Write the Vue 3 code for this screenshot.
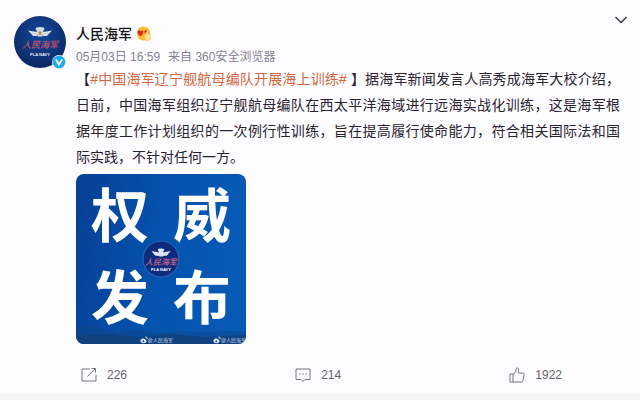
<script setup>
const post = {
  author: '人民海军',
  time: '05月03日 16:59',
  source: '360安全浏览器',
  topic: '#中国海军辽宁舰航母编队开展海上训练#',
  text: '据海军新闻发言人高秀成海军大校介绍，日前，中国海军组织辽宁舰航母编队在西太平洋海域进行远海实战化训练，这是海军根据年度工作计划组织的一次例行性训练，旨在提高履行使命能力，符合相关国际法和国际实践，不针对任何一方。',
  reposts: 226,
  comments: 214,
  likes: 1922,
}

const posterChars = ['权', '威', '发', '布']
</script>

<template>
  <main class="feed">
    <article class="card">
      <header class="head">
        <a class="avatar" href="#" aria-label="人民海军">
          <svg class="avatar-img" viewBox="0 0 52 52">
            <defs>
              <radialGradient id="navy" cx="50%" cy="35%" r="65%">
                <stop offset="0" stop-color="#12479b" />
                <stop offset="1" stop-color="#0d2862" />
              </radialGradient>
            </defs>
            <circle cx="26" cy="26" r="26" fill="url(#navy)" />
            <g fill="#d9dde2">
              <path d="M14 14.500 L23 16 L23 20 L19 20 Z" />
              <path d="M38 14.500 L29 16 L29 20 L33 20 Z" />
              <path d="M22.500 14 L29.500 14 L28.500 20.500 L23.500 20.500 Z" />
              <ellipse cx="26" cy="12.800" rx="4.500" ry="1.800" />
            </g>
            <path d="M24.500 15.500h3v2.500l-1.500 1.300-1.500-1.300z" fill="#b8923f" />
            <text class="logo-script" x="26" y="32" text-anchor="middle">人民海军</text>
            <text class="logo-latin" x="26" y="40" text-anchor="middle">PLA NAVY</text>
          </svg>
          <svg class="verified" viewBox="0 0 14 14">
            <circle cx="7" cy="7" r="7" fill="#e9f7ff" />
            <circle cx="7" cy="7" r="6.300" fill="#1eaaf1" />
            <path d="M4 4.500 L6.800 9.500 L10.200 4.500" fill="none" stroke="#fff" stroke-width="1.800" />
          </svg>
        </a>
        <div class="who">
          <div class="name-row">
            <a class="name" href="#">{{ post.author }}</a>
            <svg class="medal" viewBox="0 0 16 16">
              <rect x="1" y=".5" width="13" height="14" rx="6" fill="#fbc02f" />
              <path d="M1.500 5.500c1-2 3-1.500 3.300-.3c.8-1.200 2.700-.8 2.500 1.200c-.2 1.800-1.400 3-2.500 3.800C2.800 9.400 1.200 7.500 1.500 5.500z" fill="#d4301c" />
              <path d="M8.300 5c1-1.300 3-.8 2.900.9c0 1.500-1.200 2.700-2.200 3.500z" fill="#d4301c" />
              <path d="M8.300 10.500V8.500q.6-.8 1.300 0V6.500q.7-.9 1.400 0V5q.7-.9 1.400 0V8l.8-.8q1-.3 1 .8V12.500q-.5 2-3 2.200Q8.300 14.500 8.300 10.500z" fill="#ffe28f" stroke="#efa32f" stroke-width=".5" />
            </svg>
          </div>
          <p class="meta"><time>{{ post.time }}</time><span>来自 <a href="#">{{ post.source }}</a></span></p>
        </div>
        <button class="more" type="button" aria-label="更多">
          <svg viewBox="0 0 14 8"><path d="M1.500 1 L7 6.500 L12.500 1" fill="none" stroke="#3b3b40" stroke-width="1.500" /></svg>
        </button>
      </header>

      <div class="body">
        <p class="text">【<a class="topic" href="#">{{ post.topic }}</a> 】{{ post.text }}</p>

        <a class="poster" href="#">
          <span v-for="c in posterChars" :key="c" class="poster-char">{{ c }}</span>
          <svg class="hills" viewBox="0 0 170 30" preserveAspectRatio="none">
            <path d="M0 14 L14 11 L24 15 L40 18 L62 15 L82 19 L104 17 L125 19 L148 17 L170 18 V30 H0z" fill="#0f4588" opacity=".5" />
            <path d="M0 22 L30 20 L60 23 L95 20 L130 23 L170 21 V30 H0z" fill="#123d75" opacity=".7" />
          </svg>
          <svg class="seal" viewBox="0 0 38 38">
            <circle cx="19" cy="19" r="18" fill="#0e2c7c" stroke="#2e6cc4" stroke-width="1" />
            <g fill="#dce6f5">
              <path d="M9.500 11 L17 12.500 L17 16 L13 15.500 Z" />
              <path d="M28.500 11 L21 12.500 L21 16 L25 15.500 Z" />
              <path d="M16.500 11h5l-.7 5.500h-3.600z" />
              <ellipse cx="19" cy="10" rx="3.200" ry="1.400" />
            </g>
            <text class="seal-script" x="19" y="25" text-anchor="middle">人民海军</text>
            <text class="seal-latin" x="19" y="31" text-anchor="middle">PLA NAVY</text>
          </svg>
          <span class="marks">
            <span v-for="n in 2" :key="n" class="mark">
              <svg viewBox="0 0 8 8"><path d="M3.500 2C1 2.600 0 4.400.6 5.800C1.600 8 6.500 7.500 6.500 5C6.500 4 5.500 4 5.500 4C5.800 2.800 4.500 2.700 3.500 3.200z" fill="#e4ebf3" /><circle cx="3.300" cy="5.200" r="1" fill="#23528c" /><path d="M5.300 1Q7.400.8 7.300 3" fill="none" stroke="#e4ebf3" /></svg>
              @人民海军
            </span>
          </span>
        </a>
      </div>

      <footer class="actions">
        <button class="action" type="button" aria-label="转发">
          <svg viewBox="0 0 16 16"><path d="M9 2H1v12h14V8M6.500 9.500 L14.500 1.500M10.500 1.500h4v4" /></svg>
          <span>{{ post.reposts }}</span>
        </button>
        <button class="action" type="button" aria-label="评论">
          <svg viewBox="0 0 16 16"><path d="M1 2h14v10.500h-5L8 14.500l-2-2H1z" /><path d="M4 7h1.500M7.300 7h1.500M10.500 7h1.500" /></svg>
          <span>{{ post.comments }}</span>
        </button>
        <button class="action" type="button" aria-label="赞">
          <svg viewBox="0 0 16 16"><path d="M1 7h3v8H1zM4 7.500C6.500 6 7 4 7.200 1.800Q7.400.8 8.500 1Q9.800 1.300 9.600 3.500L9.200 6H14q1.200.1 1 1.300L14 13.800Q13.700 15 12.500 15H4" /></svg>
          <span>{{ post.likes }}</span>
        </button>
      </footer>
    </article>
  </main>
</template>

<style>
body {
  margin: 0;
  background: #f5f5f6;
}
</style>

<style scoped>
.feed {
  min-height: 100vh;
  font-family: "Liberation Sans", "Noto Sans CJK SC", sans-serif;
  color: #29232f;
}

.card {
  background: #fdfdff;
  border-radius: 0 0 4px 4px;
}

a {
  color: inherit;
  text-decoration: none;
}

p {
  margin: 0;
}

button {
  padding: 0;
  border: 0;
  background: none;
  font: inherit;
  cursor: pointer;
}

.head {
  display: flex;
  align-items: flex-start;
  padding: 16px 12px 0 14px;
}

.avatar {
  position: relative;
  width: 52px;
  height: 50px;
  margin-right: 10px;
}

.avatar-img {
  display: block;
  width: 52px;
  height: 52px;
}

.logo-script {
  font-size: 9px;
  font-style: italic;
  font-weight: 500;
  fill: #c6526c;
}

.logo-latin {
  font-size: 4px;
  font-weight: 700;
  fill: #e8ebf2;
}

.verified {
  position: absolute;
  right: 0;
  bottom: -3px;
  width: 14px;
  height: 14px;
}

.who {
  flex: 1;
  padding-top: 8px;
}

.name-row {
  display: flex;
  align-items: center;
  gap: 4px;
  height: 20px;
}

.name {
  font-size: 14px;
  line-height: 20px;
  font-weight: 500;
  color: #16131b;
}

.medal {
  width: 16px;
  height: 16px;
}

.meta {
  display: flex;
  gap: 8px;
  padding-top: 4px;
  font-size: 12px;
  line-height: 18px;
  color: #85818f;
}

.more svg {
  display: block;
  width: 14px;
  height: 8px;
}

.body {
  padding: 0 20px 0 76px;
}

.text {
  font-size: 14px;
  line-height: 26px;
  text-align: justify;
}

.topic {
  color: #d0673f;
}

.poster {
  position: relative;
  display: grid;
  grid-template-columns: 82px 82px;
  grid-template-rows: 82px 82px;
  box-sizing: border-box;
  width: 170px;
  height: 170px;
  margin-top: 4px;
  padding: 2px 3px;
  border-radius: 8px;
  overflow: hidden;
  background: linear-gradient(100deg, #063f96 0%, #0553ae 50%, #075cb8 100%);
}

.poster-char {
  position: relative;
  z-index: 1;
  font-size: 58px;
  line-height: 82px;
  font-weight: 700;
  text-align: center;
  color: #fff;
}

.hills {
  position: absolute;
  left: 0;
  bottom: 0;
  width: 100%;
  height: 30px;
}

.seal {
  position: absolute;
  top: 66px;
  left: 66px;
  z-index: 2;
  width: 38px;
  height: 38px;
}

.seal-script {
  font-size: 8px;
  font-style: italic;
  font-weight: 500;
  fill: #d0618e;
}

.seal-latin {
  font-size: 4px;
  font-weight: 700;
  fill: #fff;
}

.marks {
  position: absolute;
  right: 0;
  bottom: 0;
  display: flex;
  justify-content: flex-end;
  gap: 40px;
}

.mark {
  display: flex;
  align-items: center;
  font-size: 5px;
  line-height: 8px;
  white-space: nowrap;
  color: #d5dfeb;
}

.mark svg {
  width: 8px;
  height: 8px;
}

.actions {
  display: grid;
  grid-template-columns: 1fr 1fr auto;
  justify-items: start;
  padding: 20px 78px 8px 81px;
}

.action {
  display: flex;
  align-items: center;
  gap: 10px;
  font-size: 12px;
  line-height: 22px;
  color: #67646e;
}

.action svg {
  width: 16px;
  height: 16px;
  fill: none;
  stroke: #77747c;
  stroke-width: 1;
}
</style>
